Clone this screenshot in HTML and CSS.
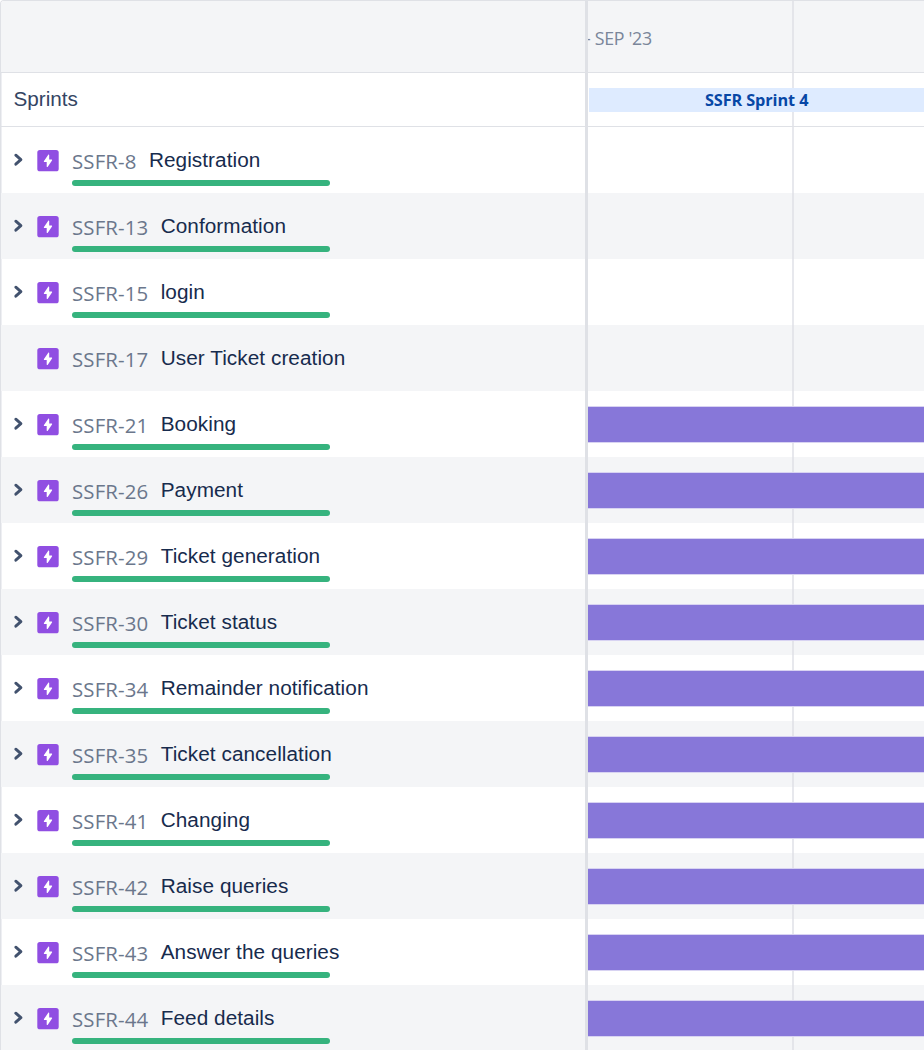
FILE: index.html
```html
<!DOCTYPE html>
<html lang="en">
<head>
<meta charset="utf-8">
<title>Roadmap</title>
<link rel="stylesheet" href="styles.css">
</head>
<body>
<svg class="defs" width="0" height="0">
  <symbol id="chevron" viewBox="0 0 10 14"><path d="M2.8 2.2 7.9 6.7 2.8 11.2" fill="none" stroke="#42526e" stroke-width="2.9" stroke-linecap="round" stroke-linejoin="round"/></symbol>
  <symbol id="epic" viewBox="0 0 22 22"><rect x=".3" y=".1" width="21.4" height="21.2" rx="2.6" fill="#904ee2"/><path d="M11.1 4.9c.4-.6 1.1-.4 1.1.3v4.2h2.3c.6 0 .8.5.5 1l-4.2 6.3c-.4.6-1.1.4-1.1-.3v-4.3H7.5c-.6 0-.8-.5-.5-1z" fill="#fff"/></symbol>
</svg>
<main class="roadmap">
  <section class="side">
    <div class="head"></div>
    <div class="sprints">Sprints</div>
    <div id="issues"></div>
  </section>
  <section class="timeline">
    <div class="head"><span class="range">- SEP '23</span></div>
    <div class="sprints"><div class="sprint"><span>SSFR Sprint 4</span></div></div>
    <div id="bars"></div>
  </section>
</main>
<script src="app.js"></script>
</body>
</html>
```
FILE: styles.css
```css
* { box-sizing: border-box; }
body { margin: 0; background: #fff; font-family: "Liberation Sans", Arial, sans-serif; color: #172b4d; }
.defs { position: absolute; }
.roadmap { display: flex; width: 924px; height: 1050px; overflow: hidden; border-top: 1px solid #dfe1e6; border-left: 1px solid #dfe1e6; border-top-left-radius: 4px; }
.side { width: 587px; flex: none; border-right: 3px solid #dfe1e6; box-shadow: inset 1px 0 #eeeff3; }
.timeline { flex: 1; min-width: 0; background: linear-gradient(#e7e8ed, #e7e8ed) 204px 0 / 2px 100% no-repeat; }
.head { height: 72px; background: #f4f5f7; border-bottom: 1px solid #dfe1e6; }
.timeline .head { background: linear-gradient(#e4e5ea, #e4e5ea) 204px 0 / 2px 100% no-repeat #f4f5f7; overflow: hidden; }
.range { display: block; margin: 24px 0 0 -3px; font: 17.8px/26px "Open Sans", sans-serif; letter-spacing: -.3px; color: #7a869a; white-space: pre; }
.sprints { height: 54px; border-bottom: 1px solid #dfe1e6; }
.side .sprints { padding: 14px 0 0 12.5px; font-size: 20.7px; line-height: 24px; color: #344563; }
.timeline .sprints { padding: 15px 0 0 1.4px; }
.sprint { height: 24px; padding-left: 115.5px; background: #deebff; color: #0747a6; font: 700 16.3px/24px "Open Sans", sans-serif; letter-spacing: -.1px; }
.row { display: flex; height: 66px; padding-left: 12px; }
.row:nth-child(even) { background-color: #f4f5f7; }
.chevron { width: 10px; height: 14px; margin: 26px 14px 0 0; }
.hidden { visibility: hidden; }
.epic { width: 22px; height: 22px; margin: 23px 13px 0 0; }
.issue { width: 420px; padding-top: 21px; }
.label { display: flex; height: 32px; white-space: nowrap; }
.key { font: 20.4px/26px "Open Sans", sans-serif; color: #6b778c; letter-spacing: .15px; }
.name { margin-left: 12.3px; font-size: 20.75px; line-height: 24px; letter-spacing: .06px; }
.progress { width: 258px; height: 6px; border-radius: 3px; background: #36b37e; }
.lane { height: 66px; padding-top: 15px; }
.lane:nth-child(even) { background: linear-gradient(#e4e5ea, #e4e5ea) 204px 0 / 2px 100% no-repeat #f4f5f7; }
.bar { height: 37px; background: #8777d9; border: solid #d8d3f2; border-width: 1px 0; }
```
FILE: app.js
```js
const issues = [
  [8, "Registration"], [13, "Conformation"], [15, "login"], [17, "User Ticket creation"],
  [21, "Booking"], [26, "Payment"], [29, "Ticket generation"], [30, "Ticket status"],
  [34, "Remainder notification"], [35, "Ticket cancellation"], [41, "Changing"],
  [42, "Raise queries"], [43, "Answer the queries"], [44, "Feed details"]
];
document.getElementById("issues").innerHTML = issues.map(([id, name]) => `
  <div class="row">
    <svg class="chevron ${id === 17 ? "hidden" : ""}"><use href="#chevron"/></svg>
    <svg class="epic"><use href="#epic"/></svg>
    <div class="issue">
      <div class="label"><span class="key">SSFR-${id}</span><span class="name">${name}</span></div>
      ${id === 17 ? "" : '<div class="progress"></div>'}
    </div>
  </div>`).join("");
document.getElementById("bars").innerHTML = issues.map((_, i) =>
  `<div class="lane">${i > 3 ? '<div class="bar"></div>' : ""}</div>`).join("");
```
